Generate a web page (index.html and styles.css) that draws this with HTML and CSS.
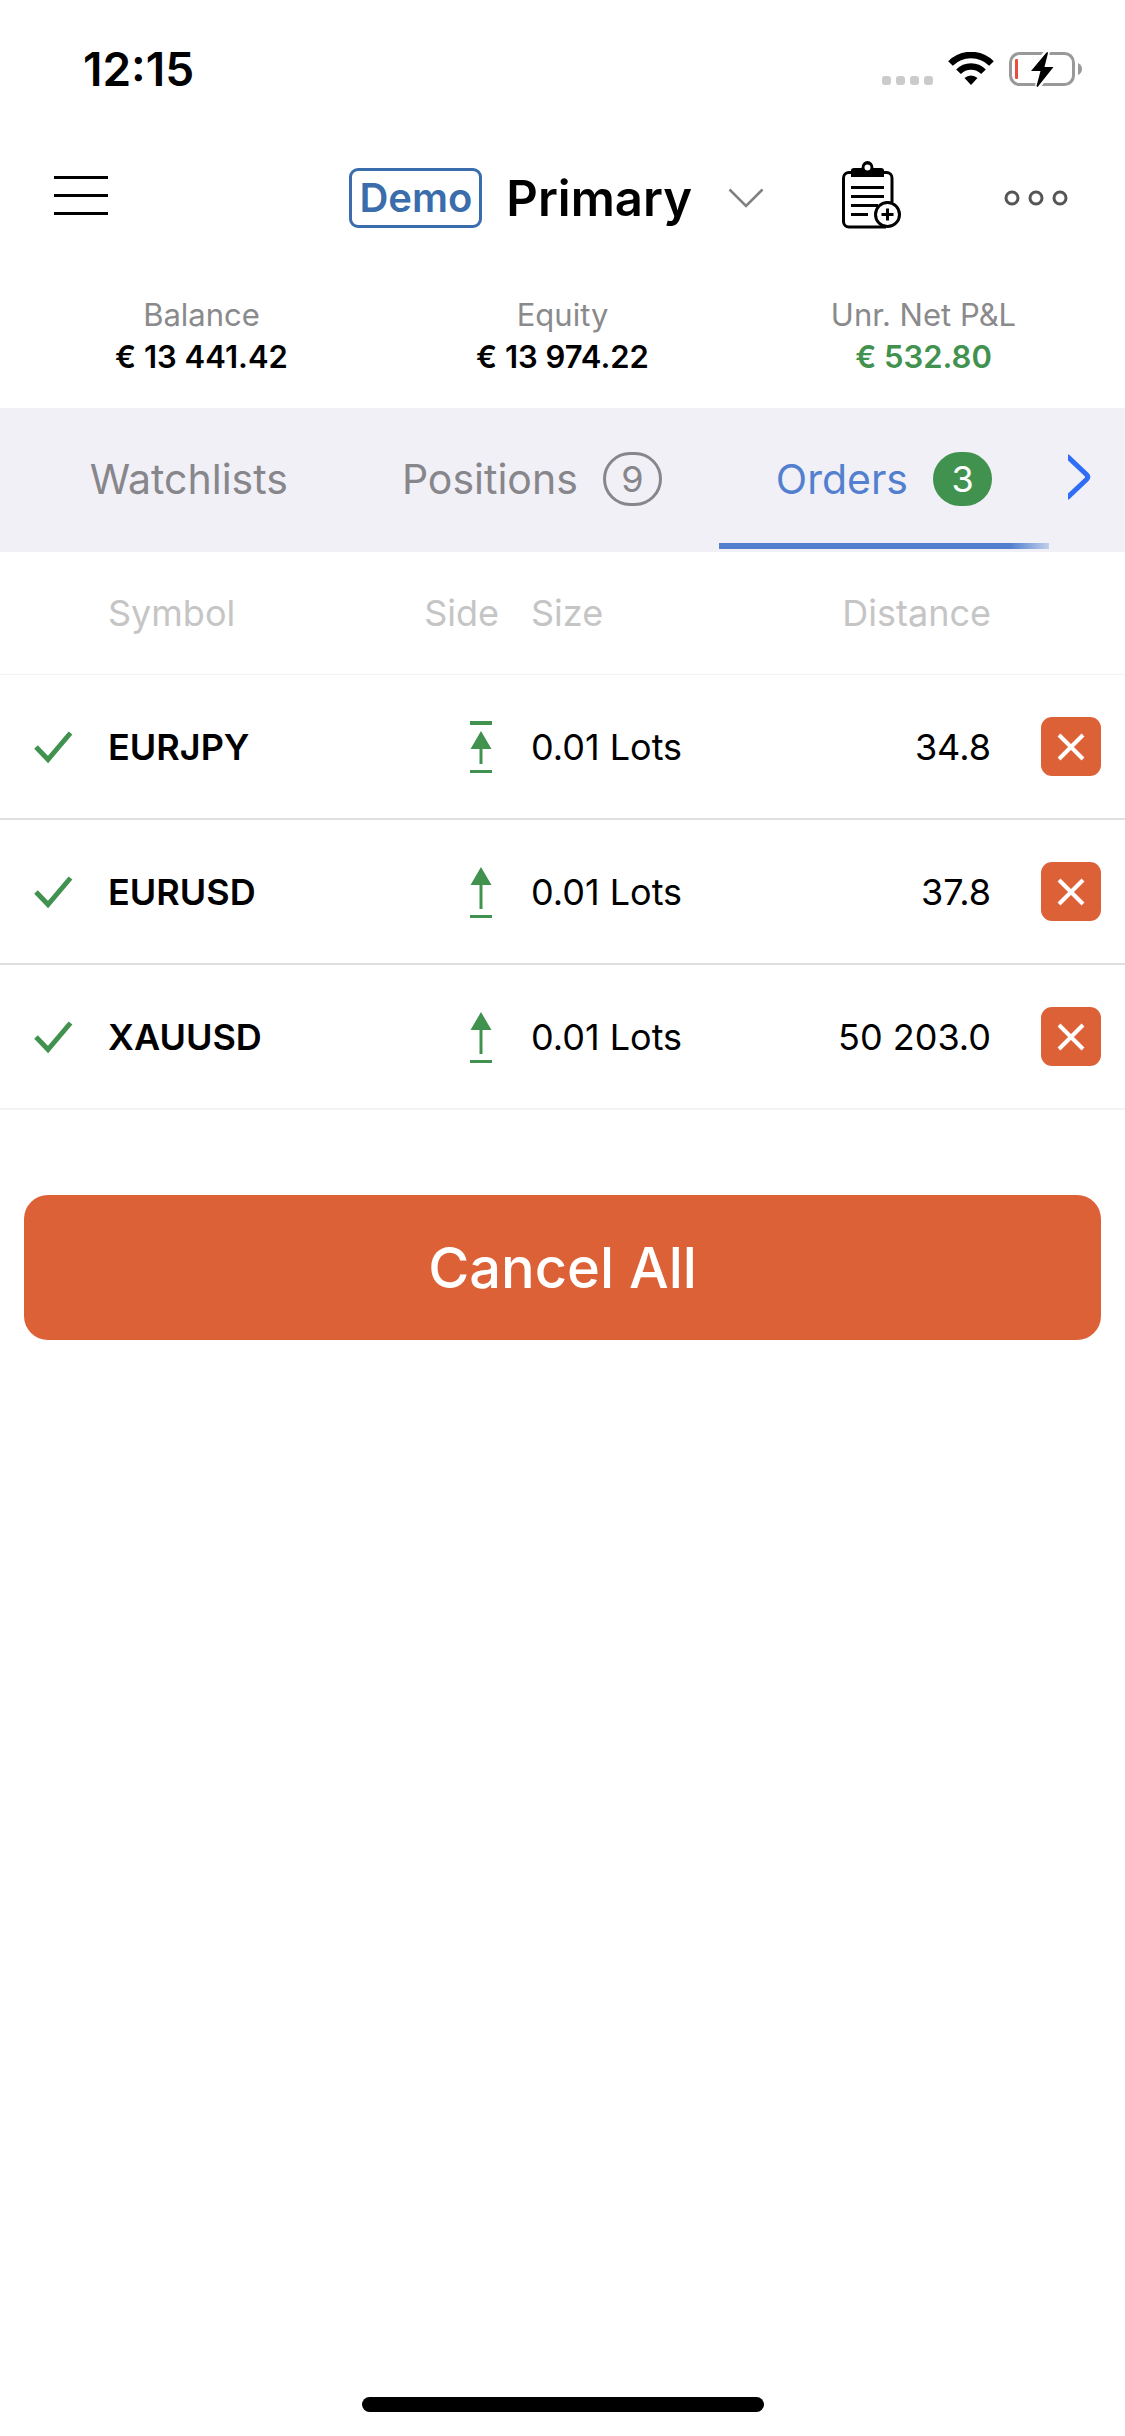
FILE: index.html
```html
<!DOCTYPE html>
<html lang="en">
<head>
    <meta charset="UTF-8">
    <meta name="viewport" content="width=device-width, initial-scale=1.0">
    <title>Orders</title>
    <link rel="stylesheet" href="styles.css">
</head>
<body>

<div class="status-bar">
    <span class="time">12:15</span>
    <div class="status-icons">
        <svg width="51" height="34" viewBox="0 0 51 34" fill="#cbcbcb">
            <rect x="0" y="24" width="9" height="9" rx="3"/>
            <rect x="14" y="24" width="9" height="9" rx="3"/>
            <rect x="28" y="24" width="9" height="9" rx="3"/>
            <rect x="42" y="24" width="9" height="9" rx="3"/>
        </svg>
        <svg width="46" height="34" viewBox="0 0 46 34">
            <path d="M2.5 11.5a29 29 0 0 1 41 0M10.500 19.700a17.500 17.500 0 0 1 25 0" fill="none" stroke="#000" stroke-width="6.500"/>
            <path d="M16.500 26a9.500 9.500 0 0 1 13 0L23 33z"/>
        </svg>
        <svg width="74" height="38" viewBox="0 0 74 38">
            <rect x="1.500" y="3.500" width="63" height="31" rx="9" fill="none" stroke="#999" stroke-width="3"/>
            <path d="M69 13q4 2 4 6t-4 6z" fill="#999"/>
            <rect x="6" y="9" width="3" height="20" rx="1" fill="#eb4d3d"/>
            <path d="M38.500 1.500L21 21.500h10L28.500 37L45 16.500H35z" stroke="#fff" stroke-width="5" fill="#fff"/>
            <path d="M37.500 2.500L22 21h9.500L27.500 36q.5 1.500 1.500.5L44.500 17H35.500L39 3q-.5-1.500-1.500-.5z"/>
        </svg>
    </div>
</div>

<header class="header">
    <button class="icon-btn" aria-label="Menu">
        <svg width="54" height="45" viewBox="0 0 54 45">
            <path d="M0 1.500h54M0 19.500h54M0 37.500h54" stroke="#000" stroke-width="3"/>
        </svg>
    </button>
    <button class="account">
        <span class="demo">Demo</span>
        <span class="account-name">Primary</span>
        <svg width="36" height="20" viewBox="0 0 36 20">
            <path d="M1.500 1.500L18 18L34.500 1.500" fill="none" stroke="#808080" stroke-width="2.500"/>
        </svg>
    </button>
    <button class="icon-btn clipboard" aria-label="New order">
        <svg width="60" height="74" viewBox="0 0 60 74">
            <path d="M10 11.500H7a5.500 5.500 0 0 0-5.500 5.500v43.500A5.500 5.500 0 0 0 7 66h37M42 11.500h2.500A5.500 5.500 0 0 1 50 17v24" fill="none" stroke="#000" stroke-width="3"/>
            <path d="M9 16V9.500Q9 7 12 7H19.500a6 7 0 0 1 12 0H39q3 0 3 2.500V16z"/>
            <circle cx="25.500" cy="6.500" r="3" fill="#fff"/>
            <path d="M9 26.500h33M9 35.500h33M9 44.500h27M9 53.500h17" stroke="#000" stroke-width="3"/>
            <circle cx="45.500" cy="53.500" r="12" fill="#fff" stroke="#000" stroke-width="3"/>
            <path d="M39.500 53.500h12M45.500 47.500v12" stroke="#000" stroke-width="3"/>
        </svg>
    </button>
    <button class="icon-btn" aria-label="More">
        <svg width="64" height="16" viewBox="0 0 64 16" fill="none" stroke="#555" stroke-width="3">
            <circle cx="8" cy="8" r="6"/>
            <circle cx="32" cy="8" r="6"/>
            <circle cx="56" cy="8" r="6"/>
        </svg>
    </button>
</header>

<dl class="summary">
    <div>
        <dt>Balance</dt>
        <dd>€ 13 441.42</dd>
    </div>
    <div>
        <dt>Equity</dt>
        <dd>€ 13 974.22</dd>
    </div>
    <div>
        <dt>Unr. Net P&amp;L</dt>
        <dd class="profit">€ 532.80</dd>
    </div>
</dl>

<nav class="tabs">
    <button class="tab">Watchlists</button>
    <button class="tab">Positions <span class="count">9</span></button>
    <button class="tab active">Orders <span class="count">3</span></button>
    <button class="next" aria-label="Next tabs">
        <svg width="23" height="48" viewBox="0 0 23 48">
            <path d="M-1 3L18.500 21.500Q21 24 18.500 26.500L-1 45" fill="none" stroke="#2f6df6" stroke-width="5"/>
        </svg>
    </button>
</nav>

<table class="orders">
    <colgroup>
        <col class="col-check">
        <col>
        <col class="col-side">
        <col class="col-size">
        <col class="col-distance">
        <col class="col-close">
    </colgroup>
    <thead>
        <tr>
            <th></th>
            <th>Symbol</th>
            <th class="side">Side</th>
            <th>Size</th>
            <th class="distance">Distance</th>
            <th></th>
        </tr>
    </thead>
    <tbody>
        <tr>
            <td class="check"><svg width="39" height="34" viewBox="0 0 39 34"><path d="M2 17L14 29.500L36.500 3" fill="none" stroke="#41924f" stroke-width="5"/></svg></td>
            <td class="symbol">EURJPY</td>
            <!-- stop order: bar above the arrow -->
            <td class="side"><svg width="22" height="52" viewBox="0 0 22 52" fill="#41924f"><path d="M0 0h22v4H0zM11 10l10.500 18H12.500v15h-3V28H.5zM0 49h22v3H0z"/></svg></td>
            <td>0.01 Lots</td>
            <td class="distance">34.8</td>
            <td class="close"><button class="close-btn" aria-label="Cancel EURJPY"><svg width="28" height="28" viewBox="0 0 28 28"><path d="M2 2l24 24M26 2L2 26" stroke="#fff" stroke-width="4"/></svg></button></td>
        </tr>
        <tr>
            <td class="check"><svg width="39" height="34" viewBox="0 0 39 34"><path d="M2 17L14 29.500L36.500 3" fill="none" stroke="#41924f" stroke-width="5"/></svg></td>
            <td class="symbol">EURUSD</td>
            <td class="side"><svg width="22" height="52" viewBox="0 0 22 52" fill="#41924f"><path d="M11 1l10.500 18H12.500v24h-3V19H.5zM0 49h22v3H0z"/></svg></td>
            <td>0.01 Lots</td>
            <td class="distance">37.8</td>
            <td class="close"><button class="close-btn" aria-label="Cancel EURUSD"><svg width="28" height="28" viewBox="0 0 28 28"><path d="M2 2l24 24M26 2L2 26" stroke="#fff" stroke-width="4"/></svg></button></td>
        </tr>
        <tr>
            <td class="check"><svg width="39" height="34" viewBox="0 0 39 34"><path d="M2 17L14 29.500L36.500 3" fill="none" stroke="#41924f" stroke-width="5"/></svg></td>
            <td class="symbol">XAUUSD</td>
            <td class="side"><svg width="22" height="52" viewBox="0 0 22 52" fill="#41924f"><path d="M11 1l10.500 18H12.500v24h-3V19H.5zM0 49h22v3H0z"/></svg></td>
            <td>0.01 Lots</td>
            <td class="distance">50 203.0</td>
            <td class="close"><button class="close-btn" aria-label="Cancel XAUUSD"><svg width="28" height="28" viewBox="0 0 28 28"><path d="M2 2l24 24M26 2L2 26" stroke="#fff" stroke-width="4"/></svg></button></td>
        </tr>
    </tbody>
</table>

<button class="cancel-all">Cancel All</button>

<div class="home-bar"></div>

</body>
</html>
```
FILE: styles.css
```css
* {
    box-sizing: border-box;
}
body {
    font-family: Inter, "Liberation Sans", sans-serif;
    margin: 0;
    min-height: 100vh;
    display: flex;
    flex-direction: column;
    background-color: #ffffff;
    color: #000000;
}
button {
    font-family: inherit;
    color: inherit;
    background: none;
    border: none;
    margin: 0;
    padding: 0;
    cursor: pointer;
}
svg {
    display: block;
}
.status-bar {
    display: flex;
    justify-content: space-between;
    align-items: center;
    height: 138px;
    padding: 0 42px 0 83px;
}
.time {
    font-size: 46px;
    font-weight: 600;
}
.status-icons {
    display: flex;
    align-items: center;
    gap: 15px;
}
.header {
    display: flex;
    align-items: center;
    height: 120px;
    padding: 0 57px 0 54px;
}
.account {
    display: flex;
    align-items: center;
    margin-left: auto;
}
.demo {
    border: 3px solid #3b6cab;
    border-radius: 9px;
    padding: 0 7px;
    font-size: 40px;
    line-height: 54px;
    font-weight: 600;
    color: #3b6cab;
}
.account-name {
    margin: 0 36px 0 24px;
    font-size: 49px;
    font-weight: 600;
}
.clipboard {
    margin: 0 102px 0 78px;
}
.summary {
    display: grid;
    grid-template-columns: repeat(3, 1fr);
    height: 150px;
    margin: 0;
    padding: 36px 21px 0;
    text-align: center;
    font-size: 31px;
    line-height: 42px;
}
.summary dt {
    color: #8a8a8c;
}
.summary dd {
    margin: 0;
    font-weight: 600;
}
.summary .profit {
    color: #41924f;
}
.tabs {
    display: flex;
    justify-content: flex-end;
    height: 144px;
    background-color: #f1f0f7;
}
.tab {
    display: flex;
    align-items: center;
    gap: 25px;
    padding: 6px 57px 0;
    border-bottom: 6px solid transparent;
    margin-bottom: 3px;
    font-size: 41px;
    color: #87868b;
}
.tab.active {
    color: #5280cf;
    border-image: linear-gradient(to right, #5280cf 87%, #d3dcf0) 6;
}
.count {
    width: 59px;
    height: 54px;
    border: 3px solid #87868b;
    border-radius: 27px;
    font-size: 36px;
    line-height: 48px;
}
.active .count {
    border-color: #41924f;
    background-color: #41924f;
    color: #ffffff;
}
.next {
    width: 76px;
    padding: 0 0 6px 19px;
}
.orders {
    width: 100%;
    table-layout: fixed;
    border-collapse: separate;
    border-spacing: 0;
    font-size: 36px;
}
.col-check {
    width: 108px;
}
.col-side {
    width: 100px;
}
.col-size {
    width: 220px;
}
.col-distance {
    width: 272px;
}
.col-close {
    width: 134px;
}
th, td {
    padding: 0;
    text-align: left;
    white-space: nowrap;
}
th {
    height: 123px;
    border-bottom: 1px solid #f3f3f3;
    font-weight: 400;
    color: #c5c5c5;
}
td {
    height: 145px;
    border-bottom: 2px solid #e0e0e0;
}
tr:last-child td {
    border-color: #f3f3f3;
}
.check {
    padding-left: 34px;
}
.symbol {
    font-weight: 600;
}
.side,
.distance {
    text-align: right;
}
td.side {
    padding-right: 7px;
}
.side svg {
    margin-left: auto;
}
.side + th,
.side + td {
    padding-left: 32px;
}
.close {
    padding-right: 24px;
}
.close-btn {
    display: flex;
    align-items: center;
    justify-content: center;
    width: 60px;
    height: 59px;
    margin-left: auto;
    border-radius: 11px;
    background-color: #dd6137;
}
.cancel-all {
    height: 145px;
    margin: 85px 24px 0;
    border-radius: 24px;
    background-color: #dd6137;
    color: #ffffff;
    font-size: 56px;
    font-weight: 500;
}
.home-bar {
    width: 402px;
    height: 15px;
    margin: auto auto 24px;
    border-radius: 8px;
    background-color: #000000;
}
```
